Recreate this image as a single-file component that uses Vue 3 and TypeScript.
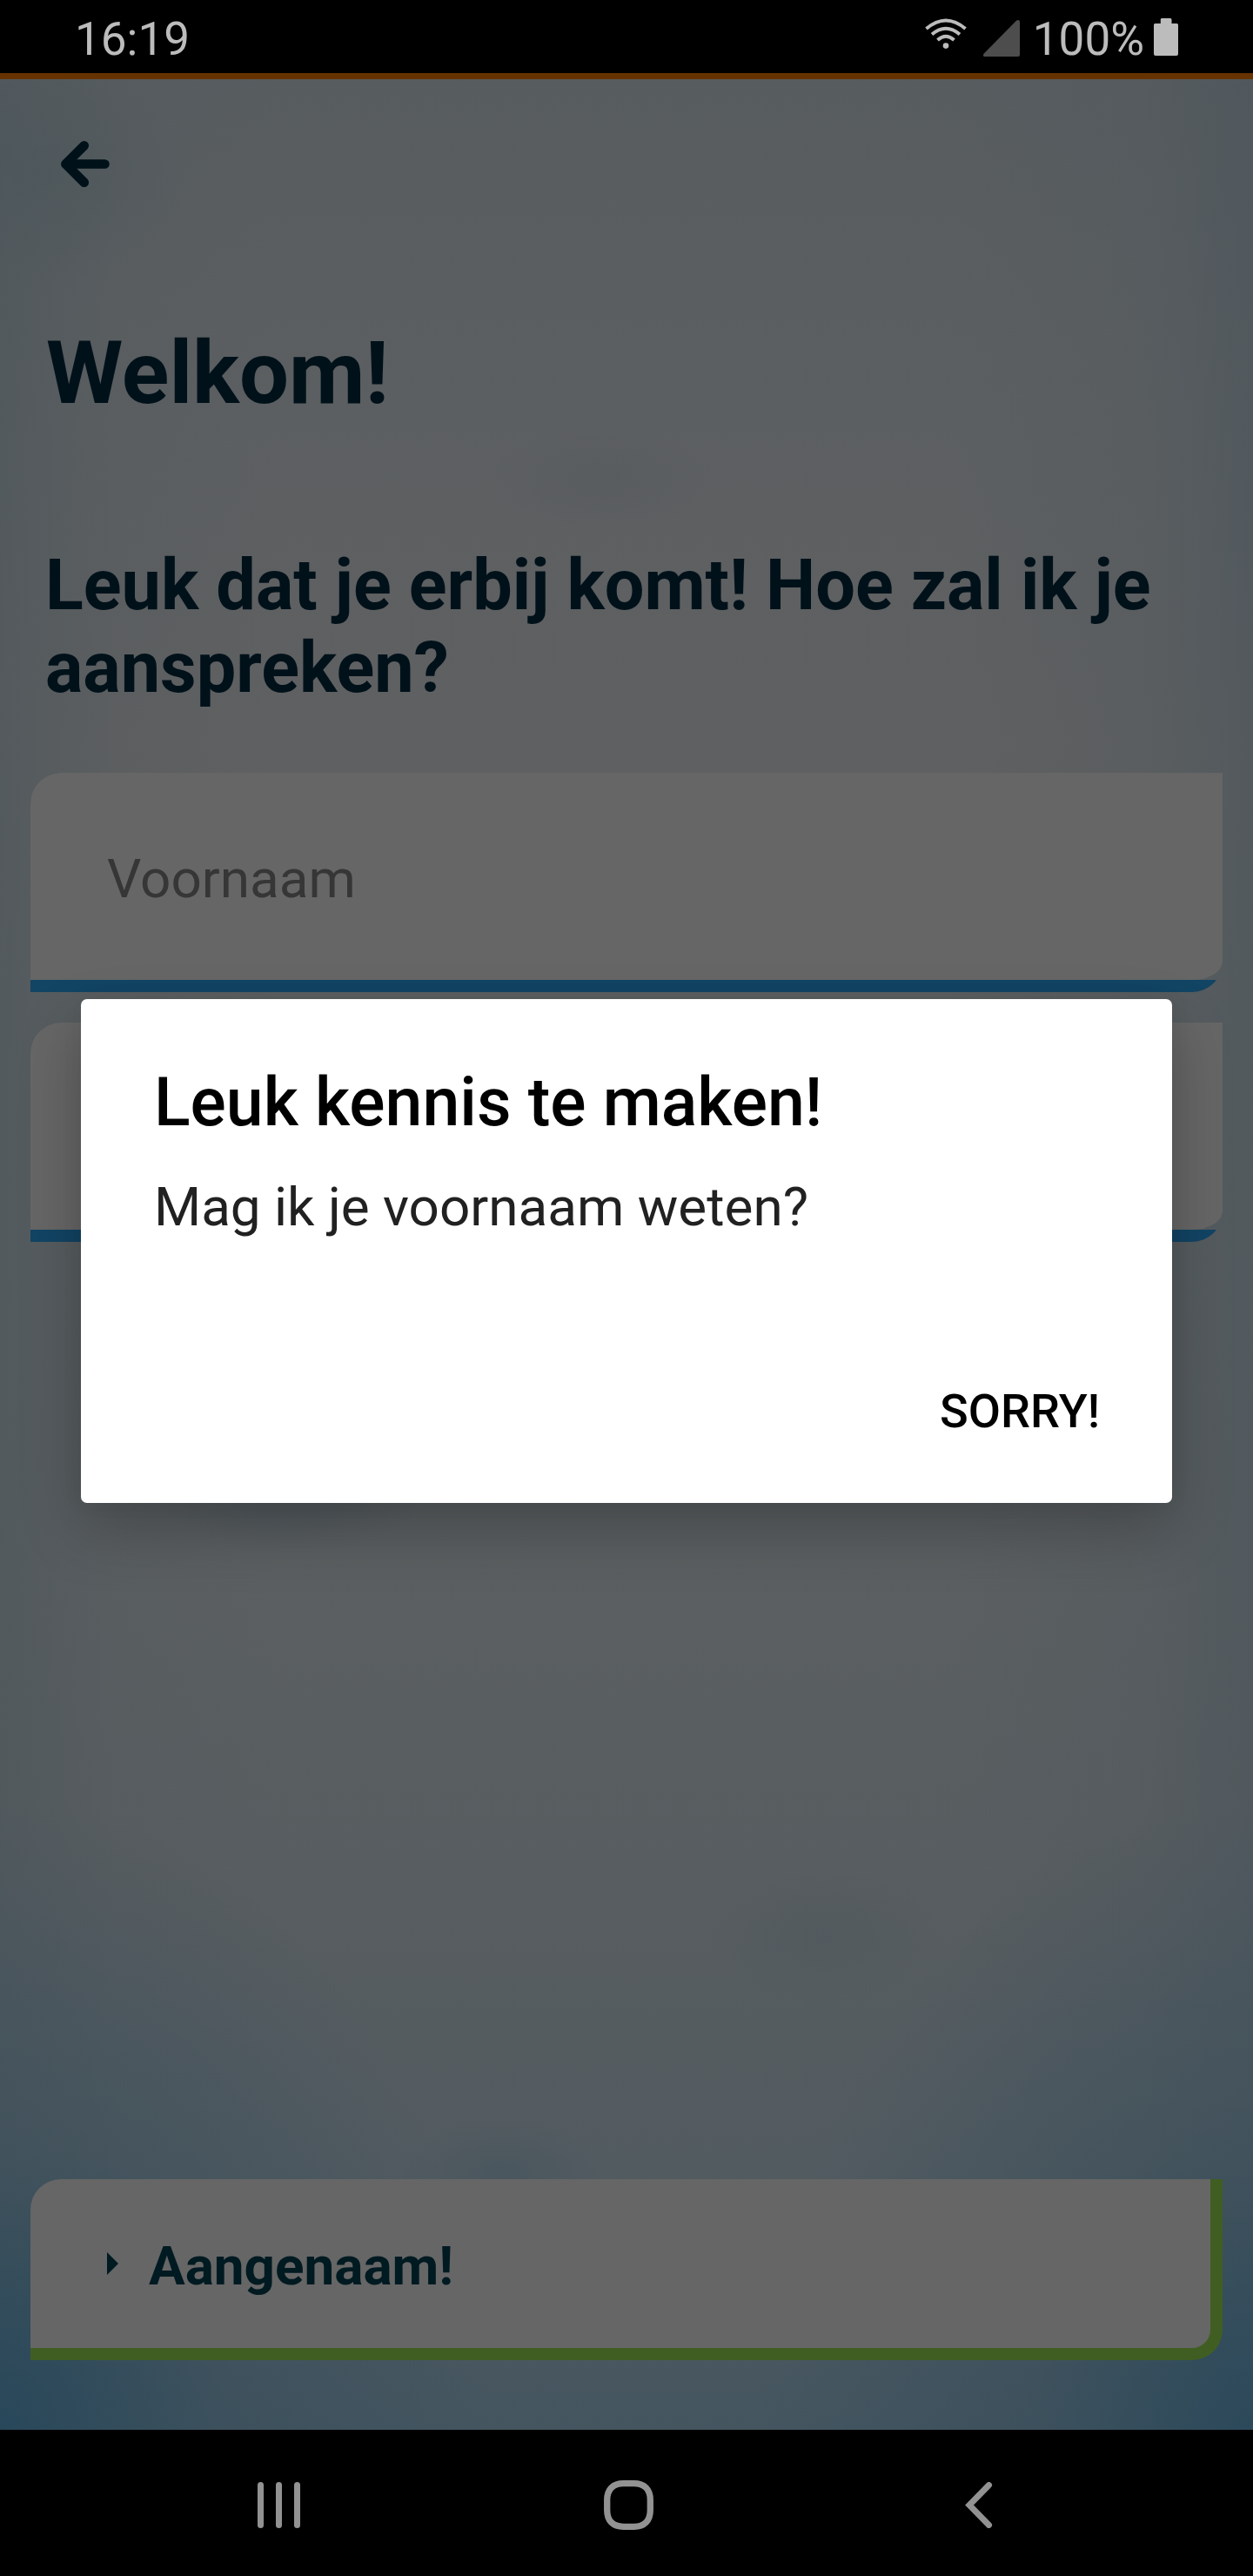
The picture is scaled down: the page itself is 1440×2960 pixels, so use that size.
<script setup lang="ts">
interface Field {
  id: string
  label: string
}

const time = '16:19'
const battery = '100%'
const fields: Field[] = [
  { id: 'first', label: 'Voornaam' },
  { id: 'last', label: '' },
]
</script>

<template>
  <div class="phone">
    <header class="status">
      <span class="status-text">{{ time }}</span>
      <div class="status-right">
        <svg class="wifi" viewBox="0 0 48 36" width="48" height="36" fill="none" stroke="#bcbcbc" stroke-width="4">
          <path d="M1.5 12 Q24 -7 46.5 12" />
          <path d="M8 18.5 Q24 5 40 18.5" />
          <path d="M14.5 25 Q24 16.5 33.5 25" />
          <circle cx="24" cy="31.6" r="3.3" fill="#bcbcbc" stroke="none" />
        </svg>
        <svg class="signal" viewBox="0 0 42 42" width="42" height="42">
          <path d="M38 .7 Q39 0 40 0 Q42 0 42 2 V40 Q42 42 40 42 H1.6 Q0 42 0 40.4 Q0 39.4 .8 38.5 Z" fill="#4d4d4d" />
        </svg>
        <span class="status-text">{{ battery }}</span>
        <svg class="battery" viewBox="0 0 28 43" width="28" height="43">
          <path d="M9 0 H19 Q20.5 0 20.5 1.5 V6 H26.5 Q28 6 28 7.5 V41 Q28 43 26 43 H2 Q0 43 0 41 V7.5 Q0 6 1.5 6 H7.8 V1.5 Q7.8 0 9 0 Z" fill="#bcbcbc" />
        </svg>
      </div>
    </header>

    <main class="screen">
      <button class="back" aria-label="Terug">
        <svg viewBox="0 0 56 53" width="56" height="53" fill="none" stroke="#00111a" stroke-width="10.7" stroke-linecap="round" stroke-linejoin="round">
          <path d="M26.7 5.35 L5.4 26.5 L26.7 47.65 M6 26.5 H50.4" />
        </svg>
      </button>
      <h1>Welkom!</h1>
      <h2>Leuk dat je erbij komt! Hoe zal ik je aanspreken?</h2>

      <div v-for="f in fields" :key="f.id" class="field">
        <div class="field-fill">{{ f.label }}</div>
      </div>

      <button class="submit">
        <svg viewBox="0 0 13 26" width="13" height="26"><path d="M0 0 L13 13 L0 26 Z" fill="#001a21" /></svg>
        <span>Aangenaam!</span>
      </button>
    </main>

    <nav class="nav">
      <svg class="recents" viewBox="0 0 49 53" width="49" height="53" fill="#929292">
        <rect x="0" width="7" height="53" rx="3.5" />
        <rect x="21" width="7" height="53" rx="3.5" />
        <rect x="42" width="7" height="53" rx="3.5" />
      </svg>
      <svg class="home" viewBox="0 0 57 57" width="57" height="57" fill="none" stroke="#929292" stroke-width="7.3">
        <path d="M22.5 3.700 H34.500 C46.500 3.700 53.300 10.500 53.300 22.500 V34.500 C53.300 46.500 46.500 53.300 34.500 53.300 H22.500 C10.500 53.300 3.700 46.500 3.700 34.500 V22.500 C3.700 10.500 10.500 3.700 22.500 3.700 Z" />
      </svg>
      <svg class="prev" viewBox="0 0 32 53" width="32" height="53" fill="none" stroke="#929292" stroke-width="7" stroke-linecap="round" stroke-linejoin="miter">
        <path d="M27.5 3.5 L5 26.5 L27.5 49.5" />
      </svg>
    </nav>

    <section class="dialog" role="alertdialog">
      <h3>Leuk kennis te maken!</h3>
      <p>Mag ik je voornaam weten?</p>
      <button class="sorry">SORRY!</button>
    </section>
  </div>
</template>

<style>
body {
  margin: 0;
  background: #000;
}
</style>

<style scoped>
.phone {
  position: relative;
  display: flex;
  flex-direction: column;
  width: 1440px;
  height: 2960px;
  overflow: hidden;
  font-family: Roboto, sans-serif;
}
h1, h2, h3, p {
  margin: 0;
}
button {
  border: 0;
  padding: 0;
  margin: 0;
  background: none;
  font-family: inherit;
  color: inherit;
}
svg {
  display: block;
  flex: none;
}
.status {
  box-sizing: border-box;
  display: flex;
  justify-content: space-between;
  height: 84px;
  padding: 14px 86px 0;
  background: #000;
}
.status-text {
  font-size: 53px;
  line-height: 62px;
  color: #bcbcbc;
}
.status-right {
  display: flex;
}
.wifi {
  margin: 7px 19px 0 0;
}
.signal {
  margin: 9px 15px 0 0;
}
.battery {
  margin: 7px 0 0 11px;
}
.screen {
  box-sizing: border-box;
  display: flex;
  flex-direction: column;
  height: 2708px;
  padding: 71px 35px 80px;
  border-top: 7px solid #663300;
  background:
    radial-gradient(ellipse 560px 720px at 0% 100%, rgba(36, 70, 90, 0.9), rgba(48, 74, 90, 0.42) 45%, rgba(60, 80, 92, 0) 100%),
    radial-gradient(ellipse 560px 720px at 100% 100%, rgba(36, 70, 90, 0.8), rgba(48, 74, 90, 0.42) 45%, rgba(60, 80, 92, 0) 100%),
    radial-gradient(ellipse 170px 130px at 3% 4%, rgba(74, 86, 90, 0.55), rgba(74, 86, 90, 0)),
    radial-gradient(ellipse 130px 60px at 48% 17%, rgba(85, 89, 92, 0.5), rgba(85, 89, 92, 0)),
    radial-gradient(ellipse 120px 60px at 40% 89%, rgba(66, 82, 92, 0.5), rgba(66, 82, 92, 0)),
    radial-gradient(ellipse 140px 80px at 66% 79%, rgba(76, 86, 92, 0.4), rgba(76, 86, 92, 0)),
    radial-gradient(ellipse 170px 90px at 23% 59.5%, rgba(62, 78, 86, 0.45), rgba(62, 78, 86, 0)),
    linear-gradient(90deg, rgba(76, 86, 91, 0.6), rgba(80, 88, 92, 0.2) 9%, rgba(80, 88, 92, 0) 22%, rgba(80, 88, 92, 0) 76%, rgba(80, 88, 92, 0.3) 91%, rgba(76, 86, 92, 0.65)),
    linear-gradient(180deg, #575c5f 0%, #5c5f61 14%, #5f6061 28%, #5c6061 45%, #5b5f61 62%, #575d60 78%, #525b60 89%, #44555f 100%);
}
.back {
  width: 56px;
  height: 53px;
  margin-left: 35px;
}
h1 {
  margin: 155px 0 0 18px;
  font-size: 101px;
  line-height: 118px;
  font-weight: 700;
  color: #00111a;
}
h2 {
  width: 1340px;
  margin: 137px 0 0 17px;
  font-size: 81px;
  line-height: 95px;
  font-weight: 700;
  color: #00111a;
}
.field {
  flex: none;
  height: 252px;
  margin-bottom: 35px;
  overflow: hidden;
  border-radius: 35px 0 35px 0;
  background: linear-gradient(#124464, #124464) bottom / 100% 14px no-repeat;
}
h2 + .field {
  margin-top: 73px;
}
.field-fill {
  box-sizing: border-box;
  height: 238px;
  padding: 85px 88px 0;
  border-radius: 35px 0 35px 0 / 35px 0 21px 0;
  background: #666;
  font-size: 62px;
  line-height: 73px;
  color: #363636;
}
.submit {
  box-sizing: border-box;
  display: flex;
  flex: none;
  height: 208px;
  margin-top: auto;
  padding: 64px 0 0 88px;
  border: solid #405e22;
  border-width: 0 14px 14px 0;
  border-radius: 35px 0 35px 0;
  background: #666;
  font-size: 62px;
  line-height: 72px;
  font-weight: 700;
  color: #001a21;
}
.submit svg {
  margin: 20px 35px 0 0;
}
.nav {
  display: flex;
  height: 168px;
  background: #000;
}
.recents {
  margin: 60px 0 0 296px;
}
.home {
  margin: 58px 0 0 349px;
}
.prev {
  margin: 60px 0 0 358px;
}
.dialog {
  position: absolute;
  top: 1148px;
  left: 93px;
  box-sizing: border-box;
  display: flex;
  flex-direction: column;
  width: 1254px;
  height: 579px;
  padding: 74px 83px 0 84px;
  border-radius: 7px;
  background: #fff;
  box-shadow: 0 32px 70px rgba(0, 0, 0, 0.23), 0 0 24px rgba(0, 0, 0, 0.06);
}
h3 {
  font-size: 77px;
  line-height: 90px;
  font-weight: 500;
  color: #000;
}
p {
  margin-top: 39px;
  font-size: 62px;
  line-height: 72px;
  color: #212121;
}
.sorry {
  align-self: flex-end;
  margin-top: 167px;
  font-size: 54px;
  line-height: 63px;
  font-weight: 500;
  color: #000;
}
</style>
